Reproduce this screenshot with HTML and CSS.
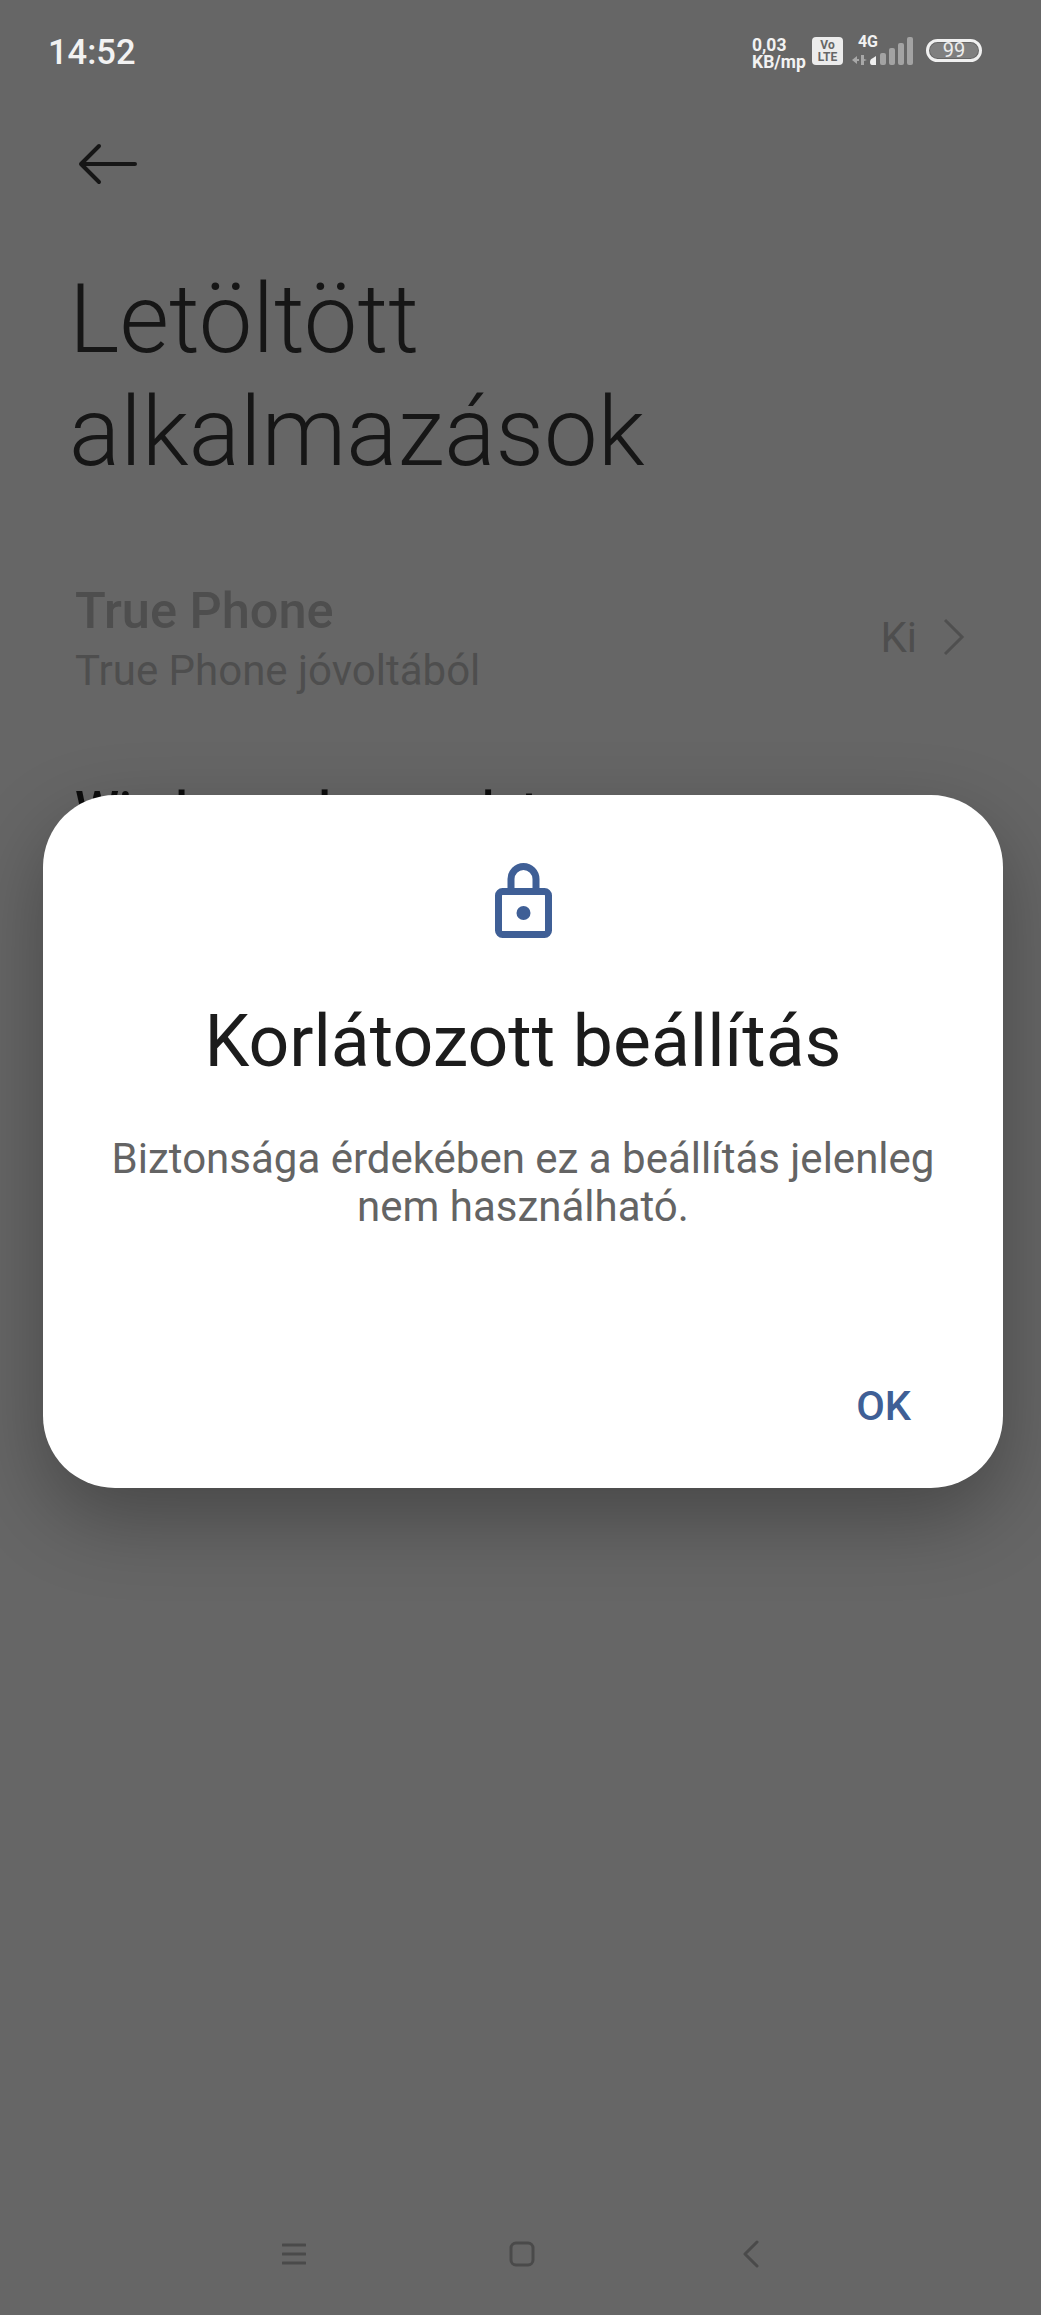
FILE: index.html
```html
<!DOCTYPE html>
<html lang="hu">
<head>
<meta charset="utf-8">
<title>Letöltött alkalmazások</title>
<link rel="stylesheet" href="styles.css">
</head>
<body>
<div class="screen">
  <header class="status">
    <span class="time">14:52</span>
    <div class="status-right">
      <span class="speed"><span>0,03</span><span>KB/mp</span></span>
      <span class="volte"><span>Vo</span><span>LTE</span></span>
      <span class="net">
        <span class="net-label">4G</span>
        <svg class="net-arrows" viewBox="0 0 15 10" width="15" height="10"><path d="M0 5l5-4v8zM5 4h2v2H5zM9 0h3v4l3 1-3 1v4H9z" fill="#a8a8a8"/></svg>
      </span>
      <svg class="signal" viewBox="0 0 43 28" width="43" height="28"><path d="M0 25q0-3 3-4l3-2v9H2q-2 0-2-3z" fill="#f0f0f0"/><rect x="10" y="16" width="6" height="12" rx="2" fill="#a3a3a3"/><rect x="19" y="11" width="6" height="17" rx="2" fill="#a3a3a3"/><rect x="28" y="6" width="6" height="22" rx="2" fill="#a3a3a3"/><rect x="37" y="0" width="6" height="28" rx="2" fill="#a3a3a3"/></svg>
      <span class="battery"><span class="battery-level">99</span></span>
    </div>
  </header>

  <svg class="back" viewBox="0 0 60 42" width="60" height="42"><path d="M4 21h54M22 3L4 21l18 18" fill="none" stroke="#161616" stroke-width="4" stroke-linecap="round" stroke-linejoin="round"/></svg>

  <h1 class="title">Letöltött<br>alkalmazások</h1>

  <div class="row">
    <div class="row-text">
      <div class="row-name">True Phone</div>
      <div class="row-sub">True Phone jóvoltából</div>
    </div>
    <div class="row-value">
      <span>Ki</span>
      <svg viewBox="0 0 24 38" width="24" height="38"><path d="M3 2l17 17L3 36" fill="none" stroke="#4f4f4f" stroke-width="3"/></svg>
    </div>
  </div>
  <div class="next-row">Windows alapon alatom</div>

  <nav class="nav">
    <svg viewBox="0 0 24 22" width="24" height="22"><path d="M1 2h22M1 11h22M1 20h22" stroke="#4a4a4a" stroke-width="3" stroke-linecap="round"/></svg>
    <svg class="nav-home" viewBox="0 0 26 26" width="26" height="26"><rect x="2" y="2" width="22" height="22" rx="5" fill="none" stroke="#4a4a4a" stroke-width="3"/></svg>
    <svg viewBox="0 0 16 28" width="16" height="28"><path d="M14 2L2 14l12 12" fill="none" stroke="#4a4a4a" stroke-width="3" stroke-linecap="round" stroke-linejoin="round"/></svg>
  </nav>

  <section class="dialog">
    <svg class="lock" viewBox="0 0 57 75" width="57" height="75"><path d="M16 28V16a12.500 12.500 0 0 1 25 0v12" fill="none" stroke="#3f5f96" stroke-width="7"/><rect x="3.500" y="28.500" width="50" height="43" rx="4" fill="none" stroke="#3f5f96" stroke-width="7"/><circle cx="28.500" cy="50" r="7" fill="#3f5f96"/></svg>
    <h2 class="dialog-title">Korlátozott beállítás</h2>
    <p class="dialog-text">Biztonsága érdekében ez a beállítás jelenleg nem használható.</p>
    <div class="dialog-actions"><span class="ok">OK</span></div>
  </section>
</div>
</body>
</html>
```
FILE: styles.css
```css
* { box-sizing: border-box; }
html, body { margin: 0; padding: 0; }
body { background: #666666; font-family: Roboto, "Noto Sans", sans-serif; }
.screen { position: relative; width: 1041px; height: 2315px; overflow: hidden; background: #666666; display: flex; flex-direction: column; }

.status { display: flex; justify-content: space-between; align-items: center; height: 50px; margin-top: 27px; padding: 0 59px 0 48px; color: #f2f2f2; }
.time { font-size: 34.500px; font-weight: 500; color: #f2f2f2; }
.status-right { align-self: flex-start; display: flex; align-items: flex-start; gap: 6px; padding-top: 10px; }
.speed { display: flex; flex-direction: column; font-size: 17.500px; line-height: 17px; font-weight: 700; width: 54px; }
.volte { display: flex; flex-direction: column; align-items: center; width: 31px; height: 28px; border-radius: 4px; background: #ececec; color: #666666; font-size: 12px; line-height: 12px; font-weight: 700; padding-top: 2px; }
.net { display: flex; flex-direction: column; align-items: flex-end; width: 26px; margin: 0 -14px 0 3px; }
.net-label { font-size: 16px; line-height: 16px; font-weight: 700; margin-top: -3px; }
.net-arrows { margin: 5px 11px 0 0; }
.battery { display: flex; align-items: center; justify-content: center; width: 56px; height: 23px; margin: 2px 0 0 7px; padding: 1px; border: 3px solid #f0f0f0; border-radius: 12px; }
.battery-level { flex: 1; height: 100%; border-radius: 8px; background: #7f7f7f; text-align: center; font-size: 20px; font-weight: 400; color: #ededed; line-height: 15px; }

.back { margin: 66px 0 0 77px; }
.title { margin: 78px 0 0 69px; font-size: 95.700px; line-height: 113px; font-weight: 300; color: #161616; }

.row { display: flex; justify-content: space-between; align-items: center; margin-top: 91px; padding: 0 75px 0 75px; }
.row-name { font-size: 50.500px; line-height: 62px; font-weight: 500; color: #4e4e4e; }
.row-sub { font-size: 42px; line-height: 58px; font-weight: 400; color: #4e4e4e; }
.row-value { display: flex; align-items: center; gap: 25px; margin-bottom: 6px; font-size: 42px; color: #4e4e4e; }

.next-row { margin: 80px 0 0 75px; font-size: 50px; line-height: 60px; font-weight: 500; color: #0d0d0d; white-space: nowrap; }

.nav { margin-top: auto; height: 30px; margin-bottom: 46px; padding-left: 282px; display: flex; align-items: center; }
.nav-home { margin: 0 208px 0 203px; }

.dialog { position: absolute; left: 43px; top: 795px; width: 960px; height: 693px; border-radius: 72px; background: #ffffff; box-shadow: 0 30px 80px rgba(0, 0, 0, 0.3); display: flex; flex-direction: column; align-items: center; padding: 68px 64px 0; }
.lock { display: block; }
.dialog-title { margin: 62px 0 0; font-size: 71.500px; line-height: 84px; font-weight: 400; color: #1c1c1c; white-space: nowrap; }
.dialog-text { margin: 51px 0 0; width: 100%; text-align: center; font-size: 42px; line-height: 48px; color: #646464; }
.dialog-actions { align-self: stretch; display: flex; justify-content: flex-end; margin-top: 151px; }
.ok { font-size: 41.500px; line-height: 48px; font-weight: 500; color: #3f5f96; margin-right: 28px; }
```
